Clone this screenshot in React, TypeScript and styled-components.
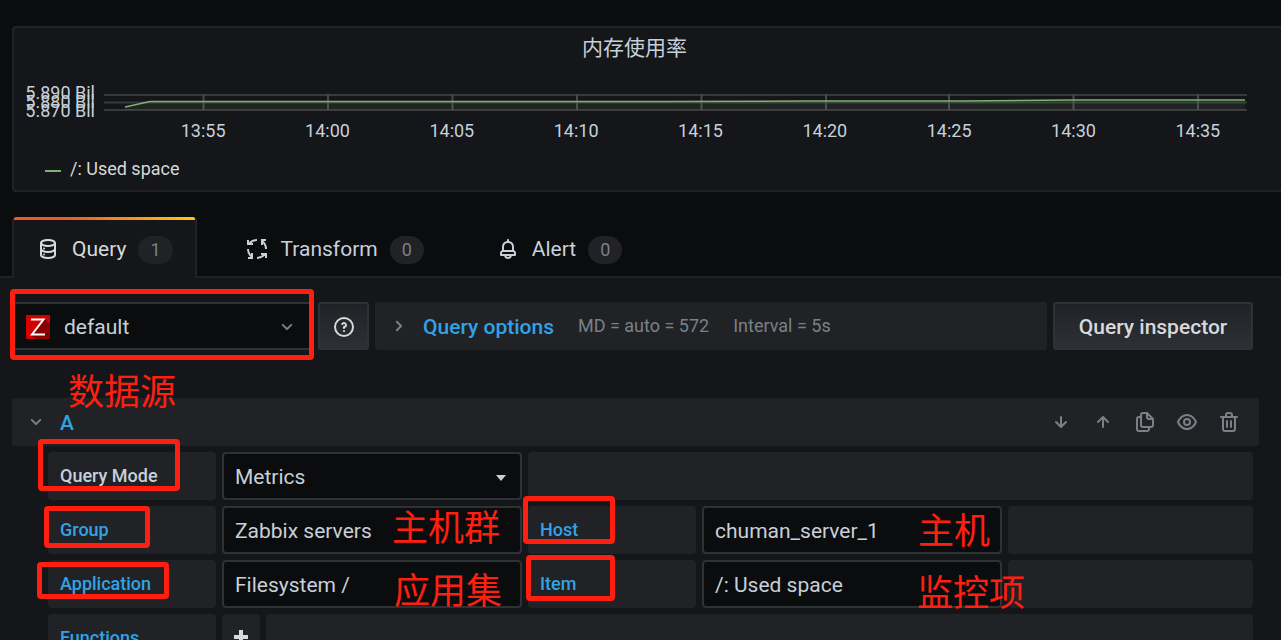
import React from "react";
import styled, { createGlobalStyle } from "styled-components";

const GlobalStyle = createGlobalStyle`
  *, *::before, *::after { box-sizing: border-box; }
  body {
    margin: 0;
    background: #141619;
    color: #c7d0d9;
    font-family: Roboto, "Noto Sans CJK SC", sans-serif;
    font-size: 21px;
    line-height: 32px;
  }
  button, input, select { font: inherit; color: inherit; margin: 0; }
`;

const Page = styled.main`
  position: relative;
  height: 100vh;
  overflow: hidden;
`;

const Top = styled.div`
  background: #0b0c0e;
  padding: 26px 0 0 12px;
`;

const Panel = styled.section`
  border: 2px solid #202226;
  border-right: 0;
  border-radius: 4px 0 0 4px;
  background: #141619;
  height: 166px;
`;

const PanelTitle = styled.h1`
  margin: 0;
  padding: 4px 26px 0 0;
  font-size: 21px;
  font-weight: 400;
  line-height: 32px;
  text-align: center;
`;

const Chart = styled.div`
  display: flex;
  align-items: flex-start;
  padding: 24px 34px 0 0;
`;

const YAxis = styled.ul`
  list-style: none;
  margin: 0;
  padding: 0 9px 0 0;
  width: 90px;
  font-size: 18px;
  text-align: right;
`;

const YTick = styled.li`
  line-height: 9px;
  white-space: nowrap;
`;

const Plot = styled.svg`
  flex: 1;
  min-width: 0;
  height: 24px;
  margin-top: 2px;
  display: block;
`;

const XAxis = styled.ul`
  list-style: none;
  margin: 0;
  padding: 4px 21px 0 127px;
  display: grid;
  grid-template-columns: repeat(9, 1fr);
  font-size: 18px;
  line-height: 24px;
  text-align: center;
`;

const Legend = styled.div`
  display: flex;
  align-items: center;
  gap: 9px;
  padding: 14px 0 0 31px;
  font-size: 18px;
  line-height: 24px;
  color: #d8d9da;
`;

const LegendSwatch = styled.span`
  width: 16px;
  height: 2px;
  margin-top: 4px;
  background: #7eb26d;
`;

const Tabs = styled.nav`
  display: flex;
  margin: 25px 0 0 -12px;
  padding-left: 12px;
  box-shadow: inset 0 -2px #202226;
`;

const Tab = styled.button<{ $active?: boolean }>`
  position: relative;
  display: flex;
  align-items: center;
  height: 61px;
  padding: 2px ${(p) => (p.$active ? 22 : 24)}px 0;
  margin-right: 24px;
  border: 0 solid #202226;
  border-width: ${(p) => (p.$active ? "0 2px" : "0")};
  border-radius: 4px 4px 0 0;
  background: ${(p) => (p.$active ? "#141619" : "transparent")};
  color: ${(p) => (p.$active ? "#d8d9da" : "#c7d0d9")};
  &::before {
    content: "";
    display: ${(p) => (p.$active ? "block" : "none")};
    position: absolute;
    inset: 0 0 auto;
    height: 3px;
    border-radius: 2px 2px 0 0;
    background: linear-gradient(to right, #f05a28 30%, #fbca0a 99%);
  }
`;

const TabLabel = styled.span`
  padding: 0 12px;
`;

const Counter = styled.span`
  padding: 0 12px;
  min-width: 34px;
  margin-top: 2px;
  border-radius: 14px;
  background: #202226;
  color: #7b8087;
  font-size: 18px;
  line-height: 28px;
`;

const Editor = styled.div`
  padding: 24px 22px 0 12px;
`;

const Toolbar = styled.div`
  display: flex;
  gap: 6px;
  padding-right: 6px;
`;

const SourcePicker = styled.button`
  display: flex;
  align-items: center;
  gap: 14px;
  width: 300px;
  height: 48px;
  padding: 2px 11px 0 12px;
  border: 2px solid #2c3235;
  border-radius: 3px;
  background: #0b0c0e;
  text-align: left;
`;

const SourceName = styled.span`
  flex: 1;
`;

const ToolButton = styled.button<{ $wide?: boolean }>`
  display: flex;
  align-items: center;
  justify-content: center;
  width: ${(p) => (p.$wide ? 200 : 51)}px;
  height: 48px;
  padding: 2px 0 0;
  border: 2px solid #2c3235;
  border-radius: 3px;
  background: linear-gradient(#202226, #2c3035);
  color: #d8d9da;
  font-weight: 500;
`;

const Options = styled.button`
  flex: 1;
  display: flex;
  align-items: center;
  height: 48px;
  padding: 0 12px;
  border: 0;
  border-radius: 3px;
  background: #202226;
  white-space: nowrap;
`;

const OptionsTitle = styled.span`
  padding: 2px 24px 0 12px;
  color: #33a2e5;
  font-weight: 500;
`;

const OptionsInfo = styled.span`
  padding-right: 24px;
  color: #7b8087;
  font-size: 18px;
`;

const QueryHeader = styled.header`
  display: flex;
  align-items: center;
  height: 48px;
  margin-top: 48px;
  padding: 0 18px 0 12px;
  border-radius: 3px;
  background: #202226;
`;

const QueryName = styled.h2`
  flex: 1;
  margin: 0;
  padding: 2px 0 0 12px;
  color: #33a2e5;
  font-size: 21px;
  font-weight: 500;
`;

const Actions = styled.div`
  display: flex;
  gap: 18px;
`;

const IconButton = styled.button`
  display: flex;
  padding: 0;
  border: 0;
  background: none;
  color: #7b8087;
`;

const Form = styled.form`
  display: flex;
  flex-direction: column;
  gap: 6px;
  padding: 6px 6px 0 36px;
`;

const Row = styled.div`
  display: flex;
  gap: 6px;
`;

const Label = styled.label<{ $plain?: boolean }>`
  flex: none;
  width: 168px;
  height: 48px;
  padding-left: 12px;
  border-radius: 4px;
  background: #202226;
  color: ${(p) => (p.$plain ? "#c7d0d9" : "#33a2e5")};
  font-size: 18px;
  font-weight: 500;
  line-height: 48px;
`;

const Field = styled.input`
  flex: none;
  width: 300px;
  height: 48px;
  padding: 2px 11px 0;
  border: 2px solid #2c3235;
  border-radius: 4px;
  background: #0b0c0e;
`;

const SelectWrap = styled.div`
  position: relative;
  flex: none;
  width: 300px;
  &::after {
    content: "";
    position: absolute;
    right: 16px;
    top: 23px;
    border: 5px solid transparent;
    border-top: 6px solid #c7d0d9;
    border-bottom: 0;
    pointer-events: none;
  }
`;

const Select = styled(Field).attrs({ as: "select" })`
  appearance: none;
  display: block;
`;

const Filler = styled.div`
  flex: 1;
  height: 48px;
  border-radius: 4px;
  background: #202226;
`;

const AddButton = styled.button`
  display: flex;
  align-items: center;
  justify-content: center;
  width: 38px;
  height: 48px;
  padding: 0;
  border: 0;
  border-radius: 4px;
  background: #202226;
  color: #d8d9da;
`;

const Frame = styled.div<{ $x: number; $y: number; $w: number; $h: number }>`
  position: absolute;
  left: ${(p) => p.$x}px;
  top: ${(p) => p.$y}px;
  width: ${(p) => p.$w}px;
  height: ${(p) => p.$h}px;
  border: 5px solid #ff1f10;
  border-radius: 4px;
  pointer-events: none;
`;

const Note = styled.span<{ $x: number; $y: number }>`
  position: absolute;
  left: ${(p) => p.$x}px;
  top: ${(p) => p.$y}px;
  color: #ff1f10;
  font-family: "Noto Sans CJK SC", sans-serif;
  font-size: 36px;
  line-height: 40px;
  white-space: nowrap;
  pointer-events: none;
`;

const paths = {
  angleDown:
    "M17,9.17a1,1,0,0,0-1.41,0L12,12.71,8.46,9.17a1,1,0,0,0-1.41,0,1,1,0,0,0,0,1.42l4.24,4.24a1,1,0,0,0,1.42,0L17,10.59A1,1,0,0,0,17,9.17Z",
  angleRight:
    "M14.83,11.29,10.59,7.05a1,1,0,0,0-1.42,0,1,1,0,0,0,0,1.41L12.71,12,9.17,15.54a1,1,0,0,0,0,1.41,1,1,0,0,0,.71.29,1,1,0,0,0,.71-.29l4.24-4.24A1,1,0,0,0,14.83,11.29Z",
  arrowDown:
    "M17.71,11.29a1,1,0,0,0-1.42,0L13,14.59V7a1,1,0,0,0-2,0v7.59l-3.29-3.3a1,1,0,0,0-1.42,1.42l5,5a1,1,0,0,0,.33.21.94.94,0,0,0,.76,0,1,1,0,0,0,.33-.21l5-5A1,1,0,0,0,17.71,11.29Z",
  arrowUp:
    "M17.71,11.29l-5-5a1,1,0,0,0-.33-.21,1,1,0,0,0-.76,0,1,1,0,0,0-.33.21l-5,5a1,1,0,0,0,1.42,1.42L11,9.41V17a1,1,0,0,0,2,0V9.41l3.29,3.3a1,1,0,0,0,1.42,0A1,1,0,0,0,17.71,11.29Z",
  question:
    "M11.29,15.29a1.58,1.58,0,0,0-.12.15.76.76,0,0,0-.09.18.64.64,0,0,0-.06.18,1.36,1.36,0,0,0,0,.2.84.84,0,0,0,.08.38.9.9,0,0,0,.54.54.94.94,0,0,0,.76,0,.9.9,0,0,0,.54-.54A1,1,0,0,0,13,16a1,1,0,0,0-.29-.71A1,1,0,0,0,11.29,15.29ZM12,2A10,10,0,1,0,22,12,10,10,0,0,0,12,2Zm0,18a8,8,0,1,1,8-8A8,8,0,0,1,12,20ZM12,7A3,3,0,0,0,9.4,8.5a1,1,0,1,0,1.73,1A1,1,0,0,1,12,9a1,1,0,0,1,0,2,1,1,0,0,0-1,1v1a1,1,0,0,0,2,0v-.18A3,3,0,0,0,12,7Z",
  bell: "M18,13.18V10a6,6,0,0,0-5-5.91V3a1,1,0,0,0-2,0V4.09A6,6,0,0,0,6,10v3.18A3,3,0,0,0,4,16v2a1,1,0,0,0,1,1H8.14a4,4,0,0,0,7.72,0H19a1,1,0,0,0,1-1V16A3,3,0,0,0,18,13.18ZM8,10a4,4,0,0,1,8,0v3H8Zm4,10a2,2,0,0,1-1.72-1h3.44A2,2,0,0,1,12,20Zm6-3H6V16a1,1,0,0,1,1-1H17a1,1,0,0,1,1,1Z",
  copy: "M21,8.94a1.31,1.31,0,0,0-.06-.27l0-.09a1.07,1.07,0,0,0-.19-.28h0l-6-6h0a1.07,1.07,0,0,0-.28-.19.32.32,0,0,0-.09,0A.88.88,0,0,0,14.05,2H10A3,3,0,0,0,7,5V6H6A3,3,0,0,0,3,9V19a3,3,0,0,0,3,3h8a3,3,0,0,0,3-3V18h1a3,3,0,0,0,3-3V9S21,9,21,8.94ZM15,5.41,17.59,8H16a1,1,0,0,1-1-1ZM15,19a1,1,0,0,1-1,1H6a1,1,0,0,1-1-1V9A1,1,0,0,1,6,8H7v7a3,3,0,0,0,3,3h5Zm4-4a1,1,0,0,1-1,1H10a1,1,0,0,1-1-1V5a1,1,0,0,1,1-1h3V7a3,3,0,0,0,3,3h3Z",
  eye: "M21.92,11.6C19.9,6.91,16.1,4,12,4S4.1,6.91,2.08,11.6a1,1,0,0,0,0,.8C4.1,17.09,7.9,20,12,20s7.9-2.91,9.92-7.6A1,1,0,0,0,21.92,11.6ZM12,18c-3.17,0-6.17-2.29-7.9-6C5.83,8.29,8.83,6,12,6s6.17,2.29,7.9,6C18.17,15.71,15.17,18,12,18ZM12,8a4,4,0,1,0,4,4A4,4,0,0,0,12,8Zm0,6a2,2,0,1,1,2-2A2,2,0,0,1,12,14Z",
  database:
    "M8,16.5a1,1,0,1,0,1,1A1,1,0,0,0,8,16.5ZM12,2C8,2,4,3.37,4,6V18c0,2.63,4,4,8,4s8-1.37,8-4V6C20,3.37,16,2,12,2Zm6,16c0,.71-2.28,2-6,2s-6-1.29-6-2V14.73A13.16,13.16,0,0,0,12,16a13.16,13.16,0,0,0,6-1.27Zm0-6c0,.71-2.28,2-6,2s-6-1.29-6-2V8.73A13.16,13.16,0,0,0,12,10a13.16,13.16,0,0,0,6-1.27ZM12,8C8.28,8,6,6.71,6,6s2.28-2,6-2,6,1.29,6,2S15.72,8,12,8ZM8,10.5a1,1,0,1,0,1,1A1,1,0,0,0,8,10.5Z",
  trash:
    "M10,18a1,1,0,0,0,1-1V11a1,1,0,0,0-2,0v6A1,1,0,0,0,10,18ZM20,6H16V5a3,3,0,0,0-3-3H11A3,3,0,0,0,8,5V6H4A1,1,0,0,0,4,8H5V19a3,3,0,0,0,3,3h8a3,3,0,0,0,3-3V8h1a1,1,0,0,0,0-2ZM10,5a1,1,0,0,1,1-1h2a1,1,0,0,1,1,1V6H10Zm7,14a1,1,0,0,1-1,1H8a1,1,0,0,1-1-1V8H17Zm-3-1a1,1,0,0,0,1-1V11a1,1,0,0,0-2,0v6A1,1,0,0,0,14,18Z",
};

const Icon = ({ name, color }: { name: keyof typeof paths; color?: string }) => (
  <svg width="24" height="24" viewBox="0 0 24 24" fill={color || "currentColor"} aria-hidden="true">
    <path d={paths[name]} />
  </svg>
);

const TransformIcon = () => (
  <svg width="24" height="24" viewBox="0 0 24 24" fill="none" stroke="currentColor" strokeWidth="2" aria-hidden="true">
    <path d="M3 3v4h5M4 7c2-2.500 4.500-4 8-4" />
    <path d="M21 3h-4v5M17 4c2.500 2 4 4.500 4 8" />
    <path d="M21 21v-4h-5M20 17c-2 2.500-4.500 4-8 4" />
    <path d="M3 21h4v-5M7 20c-2.500-2-4-4.500-4-8" />
  </svg>
);

const ZabbixLogo = () => (
  <svg width="24" height="24" viewBox="0 0 24 24" aria-hidden="true">
    <path fill="#d40000" d="M0 0h24v24H0z" />
    <path fill="#8a0000" d="M19 4l5 5v15H9l-4-4L16 6z" />
    <path fill="none" stroke="#fff" strokeWidth="2" d="M5 4.500h12.500L6 19.500h13" />
  </svg>
);

const PlusIcon = () => (
  <svg width="16" height="16" viewBox="0 0 16 16" fill="currentColor" aria-hidden="true">
    <path d="M6 0h4v5h5v4h-5v5H6V9H1V5h5z" />
  </svg>
);

const times = ["13:55", "14:00", "14:05", "14:10", "14:15", "14:20", "14:25", "14:30", "14:35"];

const frames = [
  [10, 289, 304, 71],
  [38, 439, 142, 52],
  [44, 506, 106, 42],
  [37, 562, 132, 37],
  [523, 496, 92, 48],
  [526, 555, 89, 46],
];

const notes: [string, number, number][] = [
  ["数据源", 68, 369],
  ["主机群", 392, 505],
  ["应用集", 394, 568],
  ["主机", 918, 508],
  ["监控项", 917, 570],
];

export default function App() {
  return (
    <>
      <GlobalStyle />
      <Page>
        <Top>
          <Panel>
            <PanelTitle>内存使用率</PanelTitle>
            <Chart>
              <YAxis>
                <YTick>5.890 Bil</YTick>
                <YTick>5.880 Bil</YTick>
                <YTick>5.870 Bil</YTick>
              </YAxis>
              <Plot viewBox="0 0 1143 24" preserveAspectRatio="none" role="img" aria-label="/: Used space">
                <path d="M0 5h1143M0 12.500h1143M0 20h1143" stroke="#37393d" strokeWidth="2" />
                <path
                  d="M99.500 4v16M224 4v16M348.500 4v16M473 4v16M597.500 4v16M722 4v16M845 4v16M969.500 4v16M1094 4v16"
                  stroke="#46494c"
                  strokeWidth="2"
                />
                <path d="M21 17L46 11.500H560L700 11H860L968 10H1141V20H21z" fill="#7eb26d" fillOpacity=".1" />
                <path d="M21 17L46 11.500H560L700 11H860L968 10H1141" fill="none" stroke="#7eb26d" strokeWidth="1.500" />
              </Plot>
            </Chart>
            <XAxis>
              {times.map((t) => (
                <li key={t}>{t}</li>
              ))}
            </XAxis>
            <Legend>
              <LegendSwatch />
              /: Used space
            </Legend>
          </Panel>
          <Tabs>
            <Tab $active>
              <Icon name="database" />
              <TabLabel>Query</TabLabel>
              <Counter>1</Counter>
            </Tab>
            <Tab>
              <TransformIcon />
              <TabLabel>Transform</TabLabel>
              <Counter>0</Counter>
            </Tab>
            <Tab>
              <Icon name="bell" />
              <TabLabel>Alert</TabLabel>
              <Counter>0</Counter>
            </Tab>
          </Tabs>
        </Top>
        <Editor>
          <Toolbar>
            <SourcePicker>
              <ZabbixLogo />
              <SourceName>default</SourceName>
              <Icon name="angleDown" color="#7b8087" />
            </SourcePicker>
            <ToolButton aria-label="Help">
              <Icon name="question" />
            </ToolButton>
            <Options>
              <Icon name="angleRight" color="#7b8087" />
              <OptionsTitle>Query options</OptionsTitle>
              <OptionsInfo>MD = auto = 572</OptionsInfo>
              <OptionsInfo>Interval = 5s</OptionsInfo>
            </Options>
            <ToolButton $wide>Query inspector</ToolButton>
          </Toolbar>
          <QueryHeader>
            <IconButton aria-label="Collapse query">
              <Icon name="angleDown" />
            </IconButton>
            <QueryName>A</QueryName>
            <Actions>
              <IconButton aria-label="Move down"><Icon name="arrowDown" /></IconButton>
              <IconButton aria-label="Move up"><Icon name="arrowUp" /></IconButton>
              <IconButton aria-label="Duplicate"><Icon name="copy" /></IconButton>
              <IconButton aria-label="Toggle visibility"><Icon name="eye" /></IconButton>
              <IconButton aria-label="Remove"><Icon name="trash" /></IconButton>
            </Actions>
          </QueryHeader>
          <Form>
            <Row>
              <Label $plain htmlFor="mode">Query Mode</Label>
              <SelectWrap>
                <Select id="mode">
                  <option>Metrics</option>
                </Select>
              </SelectWrap>
              <Filler />
            </Row>
            <Row>
              <Label htmlFor="group">Group</Label>
              <Field id="group" defaultValue="Zabbix servers" />
              <Label htmlFor="host">Host</Label>
              <Field id="host" defaultValue="chuman_server_1" />
              <Filler />
            </Row>
            <Row>
              <Label htmlFor="application">Application</Label>
              <Field id="application" defaultValue="Filesystem /" />
              <Label htmlFor="item">Item</Label>
              <Field id="item" defaultValue="/: Used space" />
              <Filler />
            </Row>
            <Row>
              <Label htmlFor="functions">Functions</Label>
              <AddButton id="functions" type="button" aria-label="Add function">
                <PlusIcon />
              </AddButton>
              <Filler />
            </Row>
          </Form>
        </Editor>
        {frames.map(([x, y, w, h]) => (
          <Frame key={`${x}-${y}`} $x={x} $y={y} $w={w} $h={h} />
        ))}
        {notes.map(([text, x, y]) => (
          <Note key={text} $x={x} $y={y}>
            {text}
          </Note>
        ))}
      </Page>
    </>
  );
}
